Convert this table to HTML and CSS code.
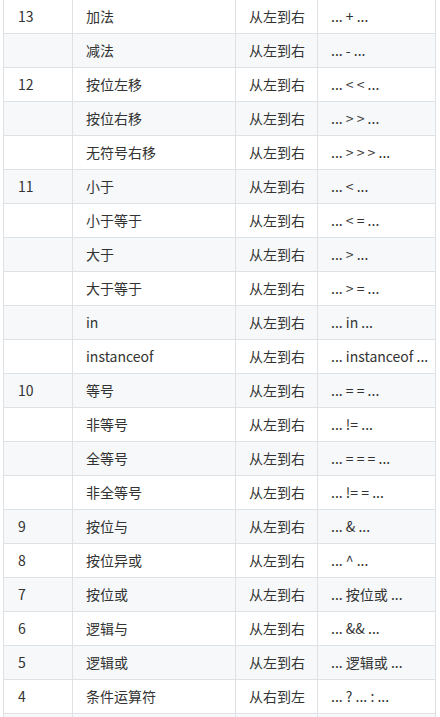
FILE: index.html
```html
<!DOCTYPE html>
<html lang="zh">
<head>
<meta charset="utf-8">
<link rel="stylesheet" href="styles.css">
</head>
<body>
<div class="page">
<table class="ops">
  <colgroup>
    <col class="c1"><col class="c2"><col class="c3"><col class="c4">
  </colgroup>
  <tbody>
    <tr><td>13</td><td>加法</td><td>从左到右</td><td>... + ...</td></tr>
    <tr><td></td><td>减法</td><td>从左到右</td><td>... - ...</td></tr>
    <tr><td>12</td><td>按位左移</td><td>从左到右</td><td>... &lt; &lt; ...</td></tr>
    <tr><td></td><td>按位右移</td><td>从左到右</td><td>... &gt; &gt; ...</td></tr>
    <tr><td></td><td>无符号右移</td><td>从左到右</td><td>... &gt; &gt; &gt; ...</td></tr>
    <tr><td>11</td><td>小于</td><td>从左到右</td><td>... &lt; ...</td></tr>
    <tr><td></td><td>小于等于</td><td>从左到右</td><td>... &lt; = ...</td></tr>
    <tr><td></td><td>大于</td><td>从左到右</td><td>... &gt; ...</td></tr>
    <tr><td></td><td>大于等于</td><td>从左到右</td><td>... &gt; = ...</td></tr>
    <tr><td></td><td>in</td><td>从左到右</td><td>... in ...</td></tr>
    <tr><td></td><td>instanceof</td><td>从左到右</td><td>... instanceof ...</td></tr>
    <tr><td>10</td><td>等号</td><td>从左到右</td><td>... = = ...</td></tr>
    <tr><td></td><td>非等号</td><td>从左到右</td><td>... != ...</td></tr>
    <tr><td></td><td>全等号</td><td>从左到右</td><td>... = = = ...</td></tr>
    <tr><td></td><td>非全等号</td><td>从左到右</td><td>... != = ...</td></tr>
    <tr><td>9</td><td>按位与</td><td>从左到右</td><td>... &amp; ...</td></tr>
    <tr><td>8</td><td>按位异或</td><td>从左到右</td><td>... ^ ...</td></tr>
    <tr><td>7</td><td>按位或</td><td>从左到右</td><td>... 按位或 ...</td></tr>
    <tr><td>6</td><td>逻辑与</td><td>从左到右</td><td>... &amp;&amp; ...</td></tr>
    <tr><td>5</td><td>逻辑或</td><td>从左到右</td><td>... 逻辑或 ...</td></tr>
    <tr><td>4</td><td>条件运算符</td><td>从右到左</td><td>... ? ... : ...</td></tr>
    <tr><td></td><td></td><td></td><td></td></tr>
  </tbody>
</table>
</div>
</body>
</html>
```
FILE: styles.css
```css
* { box-sizing: border-box; }
html, body { margin: 0; padding: 0; background: #fff; }
.page {
  padding-left: 3px;
  overflow: hidden;
  height: 717px;
}
.ops {
  border-collapse: separate;
  border-spacing: 0;
  table-layout: fixed;
  width: 433px;
  font-family: "Noto Sans CJK SC", "Noto Sans", sans-serif;
  font-size: 14px;
  color: #333;
}
.c1 { width: 70px; }
.c2 { width: 163px; }
.c3 { width: 82px; }
.c4 { width: 118px; }
.ops td {
  padding: 6px 13px;
  line-height: 21px;
  height: 34px;
  border-right: 1px solid #dfe2e5;
  border-bottom: 1px solid #dfe2e5;
  white-space: nowrap;
  overflow: hidden;
}
.ops td:first-child { border-left: 1px solid #dfe2e5; padding-left: 14px; }
.ops tr:nth-child(even) td { background: #f6f8fa; }
```
